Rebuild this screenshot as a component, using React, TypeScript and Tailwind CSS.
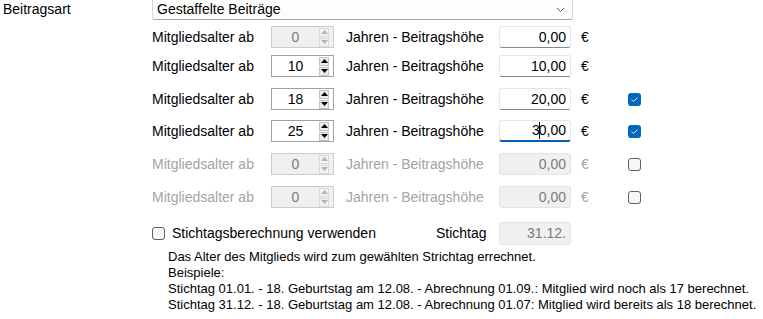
import { ReactNode } from 'react';

type Row = {
  age: string;
  amount: string;
  enabled: boolean;
  check?: boolean | null;
  focused?: boolean;
  mt: string;
};

const rows: Row[] = [
  { age: '0', amount: '0,00', enabled: true, check: null, mt: 'mt-[6px]' },
  { age: '10', amount: '10,00', enabled: true, check: null, mt: 'mt-[7px]' },
  { age: '18', amount: '20,00', enabled: true, check: true, mt: 'mt-[11px]' },
  { age: '25', amount: '30,00', enabled: true, check: true, focused: true, mt: 'mt-[10px]' },
  { age: '0', amount: '0,00', enabled: false, check: false, mt: 'mt-[11px]' },
  { age: '0', amount: '0,00', enabled: false, check: false, mt: 'mt-[11px]' },
];

const Arrow = ({ up, color }: { up?: boolean; color: string }) => (
  <svg width="7" height="4" viewBox="0 0 7 4">
    <path d={up ? 'M0 4 L3.5 0 L7 4 Z' : 'M0 0 L3.5 4 L7 0 Z'} fill={color} />
  </svg>
);

const Spinner = ({ value, disabled }: { value: string; disabled?: boolean }) => (
  <div
    className={`flex items-center w-[63px] h-[22px] border ${
      disabled ? 'bg-[#f0f0f0] border-[#cccccc] text-[#7a7a7a]' : 'bg-white border-[#a0a0a0] text-black'
    }`}
  >
    <span className="flex-1 text-center leading-none">{value}</span>
    <div className="flex flex-col gap-px mr-[4px]">
      <div
        className={`flex items-center justify-center w-[10px] h-[9px] border ${
          disabled ? 'border-[#d9d9d9] bg-[#f3f3f3]' : 'border-[#c4c4c4] bg-[#ececec]'
        }`}
      >
        <Arrow up color={disabled ? '#b4b4b4' : '#000'} />
      </div>
      <div
        className={`flex items-center justify-center w-[10px] h-[9px] border ${
          disabled ? 'border-[#d9d9d9] bg-[#f3f3f3]' : 'border-[#c4c4c4] bg-[#ececec]'
        }`}
      >
        <Arrow color={disabled ? '#b4b4b4' : '#000'} />
      </div>
    </div>
  </div>
);

const Amount = ({ children, disabled, focused }: { children: ReactNode; disabled?: boolean; focused?: boolean }) => (
  <div
    className={`flex items-center justify-end w-[72px] h-[22px] pr-[4px] rounded-[3px] border ${
      disabled
        ? 'bg-[#f0f0f0] border-[#e3e3e3] text-[#7a7a7a]'
        : focused
          ? 'bg-white border-[#e5e5e5] border-b-2 border-b-[#005fb8] text-black'
          : 'bg-white border-[#e5e5e5] border-b-[#868686] text-black'
    }`}
  >
    {children}
  </div>
);

const Check = ({ checked }: { checked: boolean }) =>
  checked ? (
    <div className="flex items-center justify-center w-[13px] h-[13px] rounded-[3px] bg-[#0067c0]">
      <svg width="9" height="7" viewBox="0 0 9 7">
        <path d="M1.5 3.5 L3.5 5.5 L7.5 1.5" stroke="#dbe9f7" strokeWidth="1" fill="none" />
      </svg>
    </div>
  ) : (
    <div className="w-[13px] h-[13px] rounded-[3px] border border-[#5f5f5f] bg-[#f7f7f7]" />
  );

export default function App() {
  return (
    <div
      className="w-[763px] h-[319px] overflow-hidden bg-white text-black text-[14px]"
      style={{ fontFamily: '"Liberation Sans", Arial, sans-serif' }}
    >
      <div className="flex items-center h-[21px] -mt-px">
        <span className="w-[152px] pl-[3px]">Beitragsart</span>
        <div className="flex items-center justify-between w-[421px] h-[21px] px-[4px] bg-[#fdfdfd] border border-[#d6d6d6] border-b-[#a8a8a8] rounded-b-[3px]">
          <span>Gestaffelte Beiträge</span>
          <svg width="9" height="6" viewBox="0 0 9 6" className="mr-[3px]">
            <path d="M1 1 L4.5 4.5 L8 1" stroke="#606060" strokeWidth="1" fill="none" />
          </svg>
        </div>
      </div>

      {rows.map((r, i) => (
        <div key={i} className={`flex items-center h-[22px] pl-[152px] ${r.mt} ${r.enabled ? 'text-black' : 'text-[#a3a3a3]'}`}>
          <span className="w-[119px]">Mitgliedsalter ab</span>
          <Spinner value={r.age} disabled={i === 0 || !r.enabled} />
          <span className="w-[165px] pl-[12px]">Jahren - Beitragshöhe</span>
          <Amount disabled={!r.enabled} focused={r.focused}>
            {r.focused ? (
              <>
                3<span className="inline-block w-px h-[17px] bg-black align-middle -mx-px" />0,00
              </>
            ) : (
              r.amount
            )}
          </Amount>
          <span className="w-[57px] pl-[10px]">€</span>
          {r.check !== null && r.check !== undefined && <Check checked={r.check} />}
        </div>
      ))}

      <div className="flex items-center h-[23px] mt-[14px] pl-[152px]">
        <Check checked={false} />
        <span className="w-[271px] pl-[7px]">Stichtagsberechnung verwenden</span>
        <span className="w-[63px]">Stichtag</span>
        <div className="flex items-center justify-end w-[72px] h-[23px] pr-[4px] rounded-[3px] bg-[#f0f0f0] border border-[#e3e3e3] text-[#7a7a7a]">
          31.12.
        </div>
      </div>

      <div className="mt-[4px] pl-[168px] text-[13px] leading-[16px]">
        <p>Das Alter des Mitglieds wird zum gewählten Strichtag errechnet.</p>
        <p>Beispiele:</p>
        <p>Stichtag 01.01. - 18. Geburtstag am 12.08. - Abrechnung 01.09.: Mitglied wird noch als 17 berechnet.</p>
        <p>Stichtag 31.12. - 18. Geburtstag am 12.08. - Abrechnung 01.07: Mitglied wird bereits als 18 berechnet.</p>
      </div>
    </div>
  );
}
